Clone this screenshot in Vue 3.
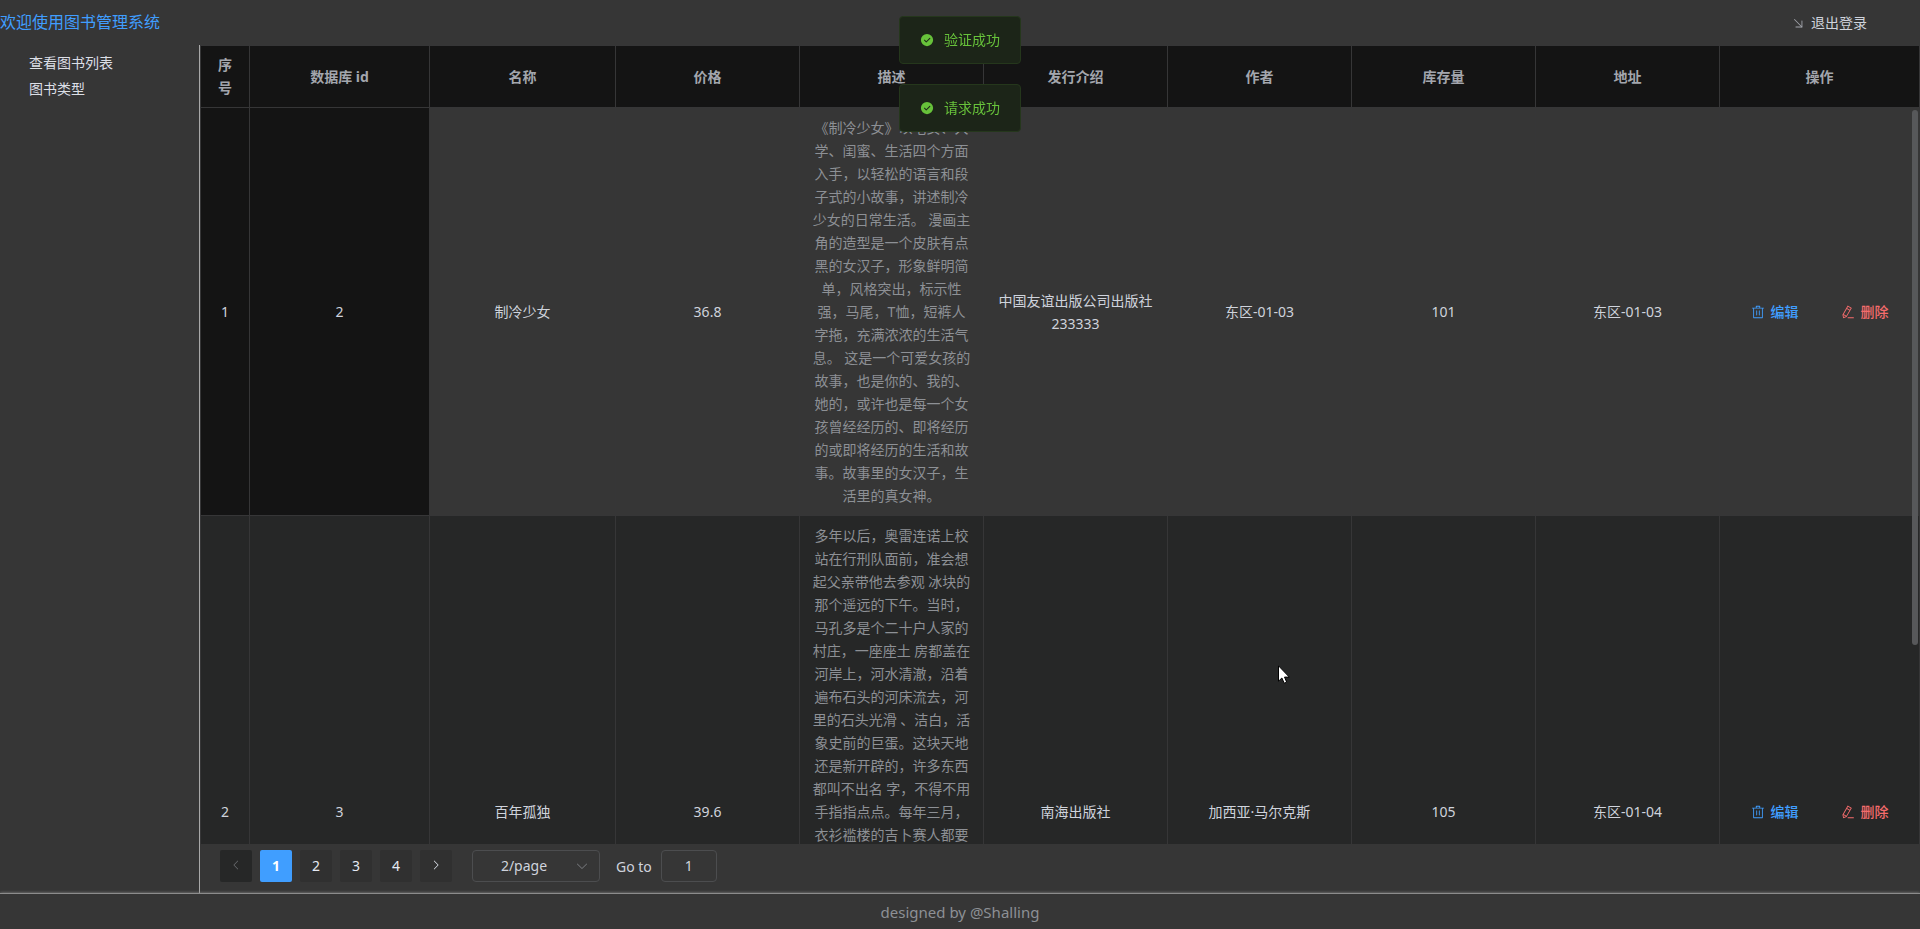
<script setup>
import { ref } from 'vue'

const messages = ['验证成功', '请求成功']
const columns = ['序号', '数据库 id', '名称', '价格', '描述', '发行介绍', '作者', '库存量', '地址', '操作']
const books = [
  {
    id: 2,
    name: '制冷少女',
    price: '36.8',
    desc: '《制冷少女》以宅女、大学、闺蜜、生活四个方面入手，以轻松的语言和段子式的小故事，讲述制冷少女的日常生活。 漫画主角的造型是一个皮肤有点黑的女汉子，形象鲜明简单，风格突出，标示性强，马尾，T恤，短裤人字拖，充满浓浓的生活气息。 这是一个可爱女孩的故事，也是你的、我的、她的，或许也是每一个女孩曾经经历的、即将经历的或即将经历的生活和故事。故事里的女汉子，生活里的真女神。',
    press: '中国友谊出版公司出版社233333',
    author: '东区-01-03',
    stock: 101,
    address: '东区-01-03',
  },
  {
    id: 3,
    name: '百年孤独',
    price: '39.6',
    desc: '多年以后，奥雷连诺上校站在行刑队面前，准会想起父亲带他去参观 冰块的那个遥远的下午。当时，马孔多是个二十户人家的村庄，一座座土 房都盖在河岸上，河水清澈，沿着遍布石头的河床流去，河里的石头光滑 、洁白，活象史前的巨蛋。这块天地还是新开辟的，许多东西都叫不出名 字，不得不用手指指点点。每年三月，衣衫褴楼的吉卜赛人都要',
    press: '南海出版社',
    author: '加西亚·马尔克斯',
    stock: 105,
    address: '东区-01-04',
  },
]
const page = ref(1)
const jump = ref('1')
const size = ref('2')
</script>

<template>
  <div class="app">
    <header class="top">
      <h1 class="brand">欢迎使用图书管理系统</h1>
      <button class="logout" type="button">
        <svg class="icon" viewBox="0 0 1024 1024"><path d="M352 768a32 32 0 1 0 0 64h448a32 32 0 0 0 32-32V352a32 32 0 0 0-64 0v416z" /><path d="M777.344 822.656a32 32 0 0 0 45.312-45.312l-544-544a32 32 0 0 0-45.312 45.312z" /></svg>
        <span>退出登录</span>
      </button>
    </header>

    <div class="middle">
      <nav class="side">
        <a href="#books">查看图书列表</a>
        <a href="#types">图书类型</a>
      </nav>

      <main class="content">
        <div class="table-wrap">
          <table class="table">
            <colgroup>
              <col class="c-index" /><col class="c-id" /><col class="c-name" />
              <col /><col /><col /><col /><col /><col />
              <col class="c-ops" />
            </colgroup>
            <thead>
              <tr>
                <th v-for="c in columns" :key="c" scope="col">{{ c }}</th>
              </tr>
            </thead>
            <tbody>
              <tr v-for="(b, i) in books" :key="b.id" :class="i === 0 ? 'hovered' : 'striped'">
                <td>{{ i + 1 }}</td>
                <td>{{ b.id }}</td>
                <td>{{ b.name }}</td>
                <td>{{ b.price }}</td>
                <td class="desc">{{ b.desc }}</td>
                <td>{{ b.press }}</td>
                <td>{{ b.author }}</td>
                <td>{{ b.stock }}</td>
                <td>{{ b.address }}</td>
                <td>
                  <div class="ops">
                    <button class="op edit" type="button">
                      <svg class="icon" viewBox="0 0 1024 1024"><path d="M160 256H96a32 32 0 0 1 0-64h256V95.936a32 32 0 0 1 32-32h256a32 32 0 0 1 32 32V192h256a32 32 0 1 1 0 64h-64v672a32 32 0 0 1-32 32H192a32 32 0 0 1-32-32zm448-64v-64H416v64zM224 896h576V256H224zm192-128a32 32 0 0 1-32-32V416a32 32 0 0 1 64 0v320a32 32 0 0 1-32 32m192 0a32 32 0 0 1-32-32V416a32 32 0 0 1 64 0v320a32 32 0 0 1-32 32" /></svg>
                      <span>编辑</span>
                    </button>
                    <button class="op remove" type="button">
                      <svg class="icon" viewBox="0 0 1024 1024"><path d="m199.04 672.64 193.984 112 224-387.968-193.92-112-224 388.032zm-23.872 60.16 32.896 148.288 144.896-45.696zM455.04 229.248l193.92 112 56.704-98.112-193.984-112-56.64 98.112zM104.32 708.8l384-665.024 304.768 175.936L409.152 884.8h.064l-248.448 78.336zm384 254.272v-64h448v64h-448z" /></svg>
                      <span>删除</span>
                    </button>
                  </div>
                </td>
              </tr>
            </tbody>
          </table>
          <div class="thumb"></div>
        </div>

        <div class="pager">
          <button class="pg" type="button" disabled aria-label="Previous page">
            <svg class="arrow flip" viewBox="0 0 1024 1024"><path d="M340.864 149.312a30.592 30.592 0 0 0 0 42.752L652.736 512 340.864 831.872a30.592 30.592 0 0 0 0 42.752 29.12 29.12 0 0 0 41.728 0L714.24 534.336a32 32 0 0 0 0-44.672L382.592 149.376a29.12 29.12 0 0 0-41.728 0z" /></svg>
          </button>
          <button v-for="n in 4" :key="n" class="pg" :class="{ active: n === page }" type="button" @click="page = n">{{ n }}</button>
          <button class="pg" type="button" aria-label="Next page">
            <svg class="arrow" viewBox="0 0 1024 1024"><path d="M340.864 149.312a30.592 30.592 0 0 0 0 42.752L652.736 512 340.864 831.872a30.592 30.592 0 0 0 0 42.752 29.12 29.12 0 0 0 41.728 0L714.24 534.336a32 32 0 0 0 0-44.672L382.592 149.376a29.12 29.12 0 0 0-41.728 0z" /></svg>
          </button>
          <div class="size">
            <select v-model="size" aria-label="Page size">
              <option value="2">2/page</option>
            </select>
            <svg class="icon caret" viewBox="0 0 1024 1024"><path d="M831.872 340.864 512 652.672 192.128 340.864a30.592 30.592 0 0 0-42.752 0 29.12 29.12 0 0 0 0 41.6L489.664 714.24a32 32 0 0 0 44.672 0l340.288-331.712a29.12 29.12 0 0 0 0-41.728 30.592 30.592 0 0 0-42.752.064z" /></svg>
          </div>
          <label class="jump">Go to <input v-model="jump" type="text" /></label>
        </div>
      </main>
    </div>

    <footer class="foot">designed by @Shalling</footer>

    <div class="messages">
      <div v-for="m in messages" :key="m" class="message" role="alert">
        <svg class="icon" viewBox="0 0 1024 1024"><path d="M512 64a448 448 0 1 1 0 896 448 448 0 0 1 0-896m-55.808 536.384-99.52-99.584a38.4 38.4 0 1 0-54.336 54.336l126.72 126.72a38.272 38.272 0 0 0 54.336 0l262.4-262.464a38.4 38.4 0 1 0-54.272-54.336z" /></svg>
        <span>{{ m }}</span>
      </div>
    </div>

    <svg class="cursor" viewBox="0 0 12 19"><path d="M.5.8v15.4l3.4-3.2 2.3 5.2 2.5-1-2.2-5.1h4.8z" /></svg>
  </div>
</template>

<style>
body {
  background: #363636;
}
</style>

<style scoped>
.app {
  display: flex;
  flex-direction: column;
  height: 100vh;
  overflow: hidden;
  background: #363636;
  color: #cfd3dc;
  font: 14px/23px "Noto Sans", "Noto Sans CJK SC", sans-serif;
}
button, input, select {
  box-sizing: border-box;
  margin: 0;
  border: 0;
  background: none;
  color: inherit;
  font: inherit;
}
.icon {
  width: 14px;
  height: 14px;
  flex: none;
  fill: currentColor;
}
.top {
  display: flex;
  flex: none;
  align-items: center;
  justify-content: space-between;
  height: 45px;
  padding-right: 53px;
}
.brand {
  margin: 0;
  color: #409eff;
  font-size: 16px;
  font-weight: 400;
}
.logout {
  display: flex;
  align-items: center;
  gap: 6px;
  padding: 0;
}
.logout .icon {
  fill: #a3a6ad;
}
.middle {
  display: flex;
  flex: 1;
  min-height: 0;
}
.side {
  display: flex;
  flex-direction: column;
  flex: none;
  box-sizing: border-box;
  width: 200px;
  padding: 5px 0 0 29px;
  border-right: 1px solid #a8a8a8;
}
.side a {
  color: #dcdfe6;
  line-height: 26px;
  text-decoration: none;
}
.content {
  display: flex;
  flex: 1;
  flex-direction: column;
  min-width: 0;
}
.table-wrap {
  position: relative;
  flex: 1;
  min-height: 0;
  overflow: hidden;
}
.table {
  width: 100%;
  border-spacing: 0;
  table-layout: fixed;
}
.c-index { width: 50px; }
.c-id { width: 180px; }
.c-name { width: 186px; }
.c-ops { width: 200px; }
th, td {
  box-sizing: border-box;
  padding: 8px 12px;
  border-right: 1px solid #363637;
  border-bottom: 1px solid #363637;
  text-align: center;
  vertical-align: middle;
  overflow-wrap: anywhere;
}
th:first-child, td:first-child {
  border-left: 1px solid #363637;
}
th {
  padding: 7px 12px 8px;
  border-top: 1px solid #363637;
  background: #141414;
  color: #a3a6ad;
  font-weight: 700;
}
td:nth-child(-n + 2) {
  background: #141414;
}
.hovered td:nth-child(n + 3) {
  background: #363636;
}
.striped {
  height: 592px;
}
.striped td {
  background: #262727;
}
.desc {
  color: #8d9095;
  vertical-align: top;
}
.ops {
  display: flex;
  justify-content: center;
  gap: 42px;
}
.op {
  display: flex;
  align-items: center;
  gap: 6px;
  padding: 0;
  font-weight: 500;
}
.edit { color: #409eff; }
.remove { color: #f56c6c; }
.thumb {
  position: absolute;
  top: 65px;
  right: 2px;
  width: 6px;
  height: 67%;
  border-radius: 3px;
  background: #57585a;
}
.pager {
  display: flex;
  flex: none;
  align-items: center;
  gap: 8px;
  padding: 6px 20px 11px;
}
.pg {
  display: flex;
  align-items: center;
  justify-content: center;
  width: 32px;
  height: 32px;
  padding: 0 0 2px;
  border-radius: 2px;
  background: #303030;
  color: #e5eaf3;
}
.pg:disabled {
  background: #262727;
  color: #6c6e72;
}
.pg.active {
  background: #409eff;
  color: #fff;
  font-weight: 700;
}
.arrow {
  width: 12px;
  height: 12px;
  fill: currentColor;
}
.flip {
  transform: rotate(180deg);
}
.size {
  position: relative;
  width: 128px;
  margin: 0 8px 0 12px;
}
.size select {
  display: block;
  width: 100%;
  height: 32px;
  padding: 0 36px 2px 12px;
  border: 1px solid #4c4d4f;
  border-radius: 4px;
  appearance: none;
  text-align: center;
  text-align-last: center;
}
.caret {
  position: absolute;
  top: 9px;
  right: 11px;
  color: #77797d;
  pointer-events: none;
}
.jump {
  display: flex;
  align-items: center;
  gap: 9px;
}
.jump input {
  width: 56px;
  height: 32px;
  padding: 0 0 2px;
  border: 1px solid #4c4d4f;
  border-radius: 4px;
  text-align: center;
}
.foot {
  flex: none;
  padding: 7px 0 5px;
  border-top: 1px solid #8c8c8c;
  box-shadow: 0 0 3px #8c8c8c;
  background: #363636;
  color: #8d9095;
  font-size: 15px;
  text-align: center;
}
.messages {
  position: fixed;
  top: 16px;
  left: 50%;
  display: flex;
  flex-direction: column;
  gap: 20px;
  transform: translateX(-50%);
}
.message {
  display: flex;
  align-items: center;
  gap: 10px;
  padding: 11px 20px 12px;
  border: 1px solid #25371c;
  border-radius: 4px;
  background: #1c2518;
  color: #67c23a;
}
.cursor {
  position: fixed;
  top: 665px;
  left: 1278px;
  width: 12px;
  height: 19px;
  fill: #fff;
  stroke: #000;
}
</style>
